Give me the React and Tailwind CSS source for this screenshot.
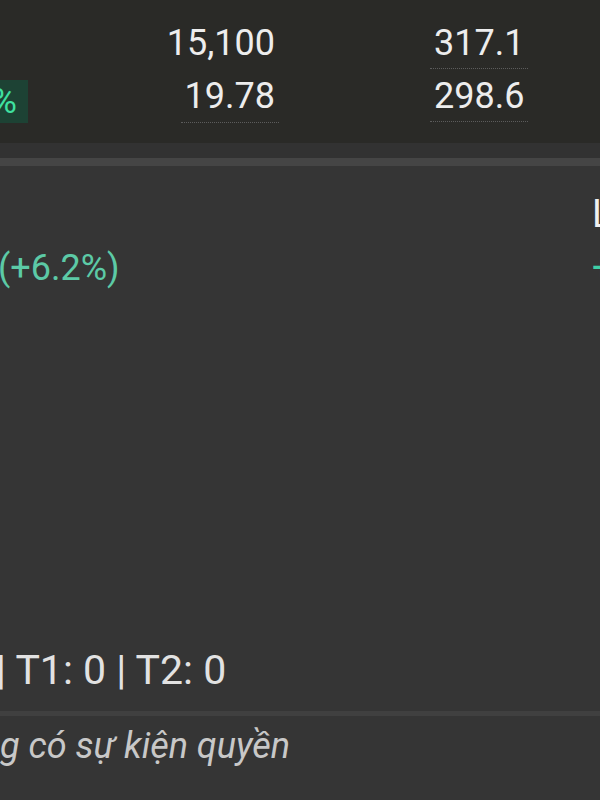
export default function App() {
  return (
    <div className="w-[600px] h-[800px] overflow-hidden bg-[#353535] font-['Roboto',sans-serif] text-[#ededed]">
      {/* top quote block */}
      <div className="h-[143px] bg-[#2a2a27] pt-[17px]">
        <div className="flex h-[53px] items-start">
          <div className="w-[279px] flex justify-end">
            <span className="mt-[8px] inline-block px-1 text-[36px] leading-[36px]">15,100</span>
          </div>
          <div className="ml-[151px]">
            <span className="mt-[8px] inline-block px-1 pb-[7px] text-[36px] leading-[36px] border-b border-dotted border-[#5c5c5c]">317.1</span>
          </div>
        </div>
        <div className="flex h-[53px] items-start">
          <div className="w-[279px] flex justify-between">
            <div className="mt-[10px] h-[43px] w-[28px] overflow-hidden bg-[#1d4234] flex items-center justify-end pr-[11px]">
              <span className="text-[35px] leading-none text-[#3fe0a0] whitespace-nowrap">%</span>
            </div>
            <span className="mt-[8px] inline-block px-1 pb-[7px] text-[36px] leading-[36px] border-b border-dotted border-[#5c5c5c]">19.78</span>
          </div>
          <div className="ml-[151px]">
            <span className="mt-[8px] inline-block px-1 pb-[7px] text-[36px] leading-[36px] border-b border-dotted border-[#5c5c5c]">298.6</span>
          </div>
        </div>
      </div>
      <div className="h-[15px] bg-[#323232]" />
      <div className="h-[8px] bg-[#454545]" />

      {/* lower block */}
      <div className="flex">
        <div className="w-[592px] shrink-0 pt-[82px]">
          <div className="ml-[-2px] text-[36px] leading-[40px] text-[#5ccaa6] whitespace-nowrap">(+6.2%)</div>
        </div>
        <div className="w-[120px] shrink-0 pt-[28px] whitespace-nowrap">
          <div className="text-[38px] leading-[40px] text-[#f0f0f0]">Lãi/lỗ</div>
          <div className="mt-[14px] text-[36px] leading-[40px] text-[#3fd0a6]">+2,300</div>
        </div>
      </div>

      <div className="mt-[358px] ml-[-4px] text-[41px] leading-[48px] text-[#e2e2e2] whitespace-nowrap">| T1: 0 | T2: 0</div>
      <div className="mt-[17px] h-[5px] bg-[#404040]" />
      <div className="mt-[8px] w-[290px] flex justify-end">
        <span className="shrink-0 whitespace-nowrap italic text-[36px] leading-[44px] text-[#c8c8c8]">Không có sự kiện quyền</span>
      </div>
    </div>
  );
}
